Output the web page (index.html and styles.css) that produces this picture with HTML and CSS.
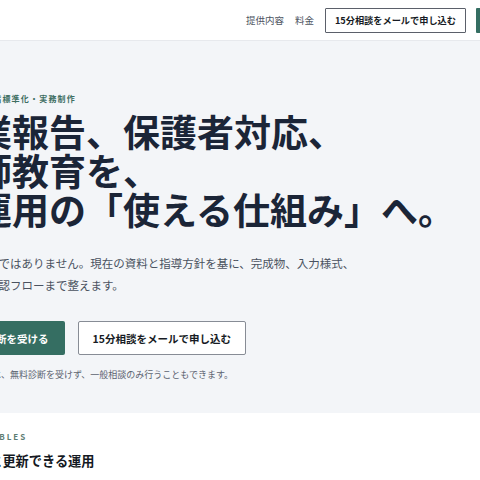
FILE: index.html
```html
<!DOCTYPE html>
<html lang="ja">
<head>
<meta charset="utf-8">
<title>校務の標準化</title>
<link rel="stylesheet" href="styles.css">
</head>
<body>
<header class="site-header">
  <div class="header-inner">
    <nav class="nav">
      <a class="nav-link" href="#">提供内容</a>
      <a class="nav-link" href="#">料金</a>
    </nav>
    <a class="btn-head btn-head-outline" href="#">15分相談をメールで申し込む</a>
    <a class="btn-head btn-head-primary" href="#">無料診断を受ける</a>
  </div>
</header>

<section class="hero">
  <div class="hero-inner">
    <p class="eyebrow">校務・評価の指標準化・実務制作</p>
    <h1 class="hero-title">授業報告、保護者対応、<br>講師教育を、<br>実運用の「使える仕組み」へ。</h1>
    <p class="lead">単なる雛形ではありません。現在の資料と指導方針を基に、完成物、入力様式、<br>ルール、確認フローまで整えます。</p>
    <div class="actions">
      <a class="btn btn-primary" href="#">無料の診断を受ける</a>
      <a class="btn btn-outline" href="#">15分相談をメールで申し込む</a>
    </div>
    <p class="note">ご希望の場合は、無料診断を受けず、一般相談のみ行うこともできます。</p>
  </div>
</section>

<section class="deliverables">
  <div class="section-inner">
    <p class="section-label">DELIVERABLES</p>
    <h2 class="section-title">資料一式と更新できる運用</h2>
  </div>
</section>
</body>
</html>
```

FILE: styles.css
```css
html, body {
  margin: 0;
  padding: 0;
  overflow: hidden;
}
body {
  font-family: "Noto Sans CJK JP", "Noto Sans", sans-serif;
  background: #ffffff;
  color: #1b2537;
  width: 480px;
}
a { text-decoration: none; color: inherit; }
p, h1, h2 { margin: 0; }

/* header */
.site-header {
  background: #ffffff;
  border-bottom: 1px solid #e7e9ed;
  height: 40px;
}
.header-inner {
  display: flex;
  align-items: center;
  justify-content: flex-end;
  height: 40px;
  margin-right: -100px;
  padding-right: 10px;
  gap: 10px;
  white-space: nowrap;
}
.nav {
  display: flex;
  gap: 11px;
  margin-right: 1px;
}
.nav-link {
  font-size: 9.5px;
  color: #4d5461;
}
.btn-head {
  flex-shrink: 0;
  display: flex;
  align-items: center;
  height: 25px;
  box-sizing: border-box;
  padding: 0 9px;
  font-size: 9.2px;
  font-weight: 700;
  border-radius: 1px;
}
.btn-head-outline {
  border: 1px solid #5b606a;
  color: #161b24;
  background: #fff;
}
.btn-head-primary {
  background: #356e62;
  color: #fff;
  width: 94px;
}

/* hero */
.hero {
  background: #f3f5f8;
  padding: 52px 0 31px;
}
.hero-inner {
  margin-left: -62px;
  width: 620px;
  white-space: nowrap;
}
.eyebrow {
  font-size: 8px;
  line-height: 12px;
  letter-spacing: 1.2px;
  font-weight: 700;
  color: #3d6e62;
}
.hero-title {
  margin-top: 6.5px;
  font-size: 37px;
  line-height: 39px;
  font-weight: 700;
  color: #1b2537;
  letter-spacing: 0;
}
.lead {
  margin-top: 23.5px;
  margin-left: 3px;
  font-size: 11.5px;
  line-height: 22px;
  color: #4a5260;
}
.actions {
  margin-top: 25px;
  display: flex;
  gap: 13px;
}
.btn {
  display: flex;
  align-items: center;
  height: 34px;
  box-sizing: border-box;
  padding: 0 16px;
  font-size: 10.5px;
  font-weight: 700;
  border-radius: 2px;
}
.btn-primary {
  background: #356e62;
  color: #ffffff;
}
.btn-outline {
  background: #ffffff;
  color: #161b24;
  border: 1px solid #878c95;
  padding: 0 14px;
}
.note {
  margin-top: 13px;
  font-size: 9px;
  line-height: 14px;
  color: #5c6370;
}

/* deliverables */
.deliverables {
  background: #ffffff;
  padding-top: 18px;
}
.section-inner {
  margin-left: -62px;
  white-space: nowrap;
}
.section-label {
  margin-left: 7px;
  font-size: 8px;
  line-height: 12px;
  letter-spacing: 2px;
  font-weight: 700;
  color: #5d7d73;
}
.section-title {
  margin-top: 9px;
  margin-left: -1.5px;
  font-size: 13.2px;
  line-height: 18px;
  font-weight: 700;
  color: #141922;
}
```
